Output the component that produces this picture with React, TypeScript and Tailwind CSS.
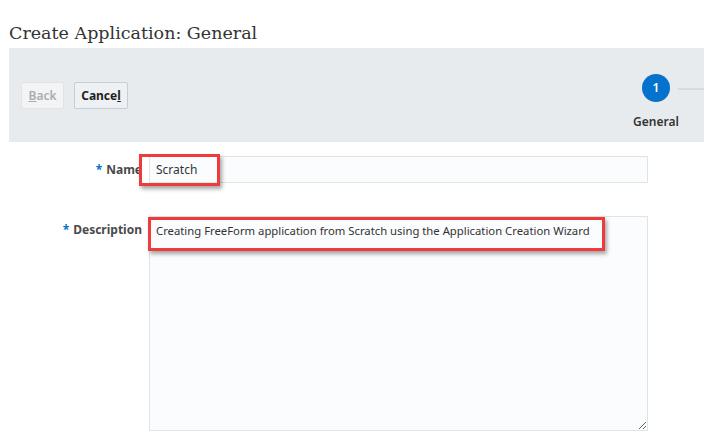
export default function App() {
  return (
    <div className="w-[704px] h-[440px] overflow-hidden bg-white font-['Noto_Sans',sans-serif] text-[#333]">
      <div className="pl-[9px] pt-[20px] h-[48px]">
        <h1 className="font-['DejaVu_Serif',serif] text-[17.5px] leading-[26px] text-[#333]">
          Create Application: General
        </h1>
      </div>

      {/* train bar */}
      <div className="ml-[9px] h-[94px] bg-[#e8ebed] flex items-start">
        <div className="flex gap-[10px] pl-[12px] pt-[34px]">
          <button className="w-[43px] h-[27px] rounded-[2px] border border-[#dfe4e7] bg-[#f2f4f5] text-[12px] font-semibold text-[#a8adb0]">
            <span className="underline">B</span>ack
          </button>
          <button className="w-[54px] h-[27px] rounded-[2px] border border-[#c4ced7] bg-[#eef1f3] text-[12px] font-bold text-[#1f1f1f]">
            Cance<span className="underline">l</span>
          </button>
        </div>
        <div className="ml-auto flex flex-col items-center pt-[26px] w-[44px]">
          <div className="w-[28px] h-[28px] rounded-full bg-[#0572ce] text-white text-[12px] font-semibold flex items-center justify-center">
            1
          </div>
          <div className="mt-[13px] text-[12px] font-semibold text-[#333] leading-[14px]">General</div>
        </div>
        <div className="w-[26px] h-[2px] bg-[#d6dadc] mt-[40px]" />
      </div>

      {/* form */}
      <div className="pt-[14px]">
        <div className="flex items-center h-[27px]">
          <label className="w-[142px] text-right text-[12px] font-bold text-[#4a4a4a]">
            <span className="text-[#0572ce] mr-[4px]">*</span>Name
          </label>
          <div className="relative ml-[7px]">
            <input
              readOnly
              value="Scratch"
              className="w-[499px] h-[27px] border border-[#dfe4e7] bg-[#fbfcfd] px-[6px] text-[12px] text-[#333] outline-none"
            />
            <div className="absolute left-[-10px] top-[-2px] w-[81px] h-[32px] border-[3px] border-[#ee3b3b] shadow-[2px_3px_4px_rgba(0,0,0,0.35)]" />
          </div>
        </div>

        <div className="flex items-start mt-[33px]">
          <label className="w-[142px] text-right text-[12px] font-bold text-[#4a4a4a] pt-[5px]">
            <span className="text-[#0572ce] mr-[4px]">*</span>Description
          </label>
          <div className="relative ml-[7px]">
            <textarea
              readOnly
              value="Creating FreeForm application from Scratch using the Application Creation Wizard"
              className="block w-[499px] h-[215px] border border-[#dfe4e7] bg-[#fbfcfd] px-[6px] pt-[6px] text-[11.3px] leading-[16px] text-[#333] outline-none resize"
            />
            <div className="absolute left-[-1px] top-[1px] w-[457px] h-[34px] border-[3px] border-[#ee3b3b] shadow-[2px_3px_4px_rgba(0,0,0,0.35)]" />
          </div>
        </div>
      </div>
    </div>
  );
}
